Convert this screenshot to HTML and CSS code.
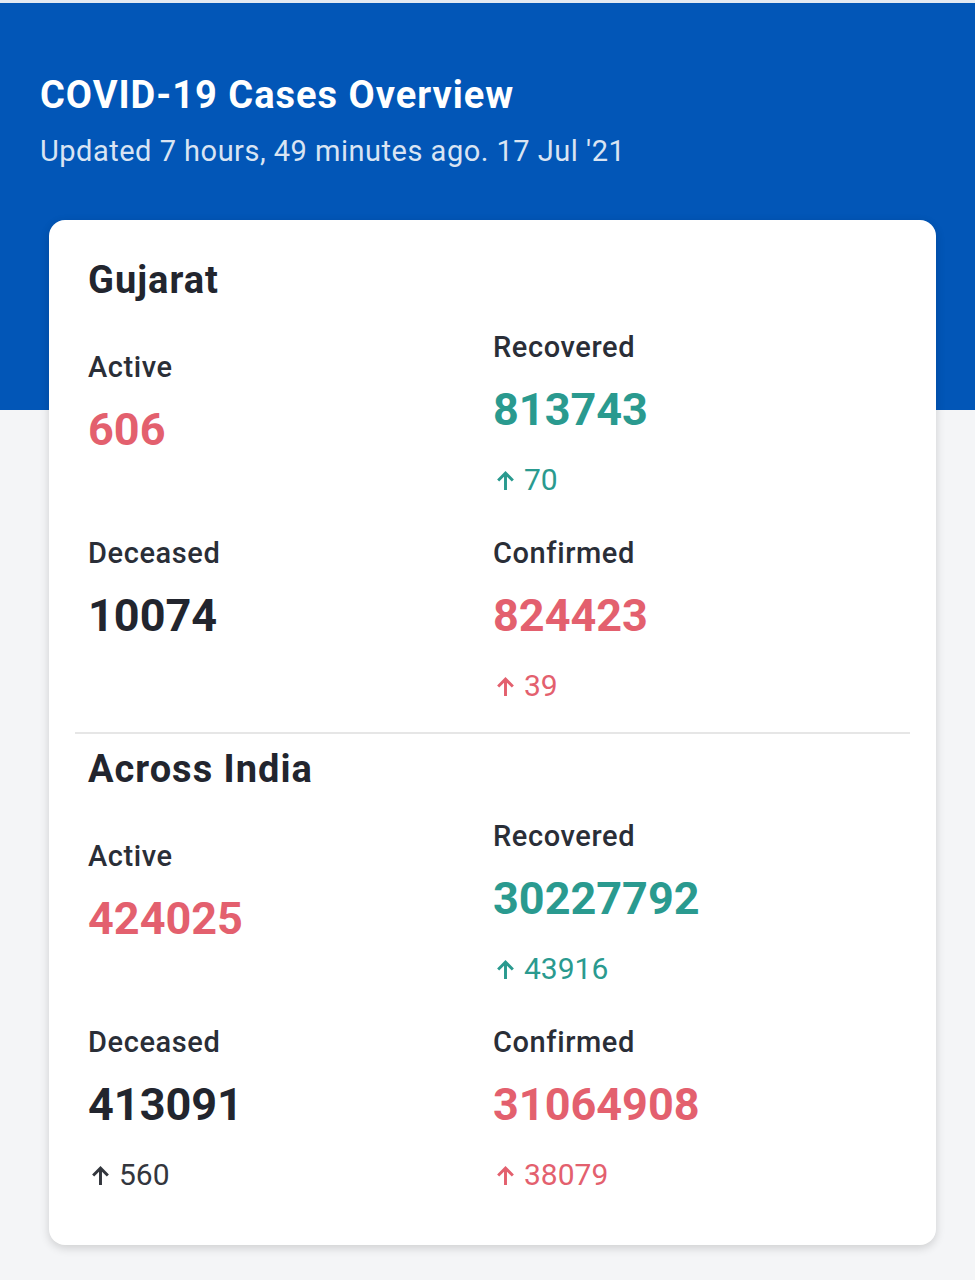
FILE: index.html
```html
<!DOCTYPE html>
<html lang="en">
<head>
<meta charset="utf-8">
<title>COVID-19 Cases Overview</title>
<link rel="stylesheet" href="styles.css">
</head>
<body>
<header class="hero">
  <h1 class="hero-title">COVID-19 Cases Overview</h1>
  <p class="hero-sub">Updated 7 hours, 49 minutes ago. 17 Jul '21</p>
</header>
<main class="card">
  <section class="region">
    <h2 class="region-title">Gujarat</h2>
    <div class="stats">
      <div class="stat stat-offset">
        <div class="label">Active</div>
        <div class="value red">606</div>
      </div>
      <div class="stat">
        <div class="label">Recovered</div>
        <div class="value teal">813743</div>
        <div class="delta teal"><svg class="arrow" viewBox="0 0 20 20"><path d="M10 19V3M3 10l7-7 7 7"/></svg>70</div>
      </div>
      <div class="stat">
        <div class="label">Deceased</div>
        <div class="value dark">10074</div>
      </div>
      <div class="stat">
        <div class="label">Confirmed</div>
        <div class="value red">824423</div>
        <div class="delta red"><svg class="arrow" viewBox="0 0 20 20"><path d="M10 19V3M3 10l7-7 7 7"/></svg>39</div>
      </div>
    </div>
  </section>
  <hr class="divider">
  <section class="region region-second">
    <h2 class="region-title">Across India</h2>
    <div class="stats">
      <div class="stat stat-offset">
        <div class="label">Active</div>
        <div class="value red">424025</div>
      </div>
      <div class="stat">
        <div class="label">Recovered</div>
        <div class="value teal">30227792</div>
        <div class="delta teal"><svg class="arrow" viewBox="0 0 20 20"><path d="M10 19V3M3 10l7-7 7 7"/></svg>43916</div>
      </div>
      <div class="stat">
        <div class="label">Deceased</div>
        <div class="value dark">413091</div>
        <div class="delta dark"><svg class="arrow" viewBox="0 0 20 20"><path d="M10 19V3M3 10l7-7 7 7"/></svg>560</div>
      </div>
      <div class="stat">
        <div class="label">Confirmed</div>
        <div class="value red">31064908</div>
        <div class="delta red"><svg class="arrow" viewBox="0 0 20 20"><path d="M10 19V3M3 10l7-7 7 7"/></svg>38079</div>
      </div>
    </div>
  </section>
</main>
</body>
</html>
```
FILE: styles.css
```css
* { box-sizing: border-box; }
html, body {
  margin: 0;
  padding: 0;
  background: #f4f5f7;
  font-family: Roboto, "Liberation Sans", Arial, sans-serif;
  color: #262a33;
}
.hero {
  height: 410px;
  border-top: 3px solid #e4eaf2;
  background: #0256b7;
  padding: 70px 0 0 40px;
}
.hero-title {
  margin: 0;
  font-size: 38px;
  line-height: 44px;
  letter-spacing: 1px;
  font-weight: 700;
  color: #ffffff;
}
.hero-sub {
  margin: 16px 0 0;
  font-size: 29px;
  line-height: 36px;
  letter-spacing: 0.5px;
  font-weight: 400;
  color: #d9e4f3;
}
.card {
  margin: -190px 39px 35px 49px;
  background: #ffffff;
  border-radius: 16px;
  box-shadow: 0 3px 10px rgba(0, 0, 0, 0.16);
  padding: 38px 26px 50px;
}
.region { padding: 0 13px; }
.region-second { padding-top: 13px; }
.region-title {
  margin: 0;
  font-size: 38px;
  line-height: 44px;
  letter-spacing: 1px;
  font-weight: 700;
  color: #22252e;
}
.stats {
  display: grid;
  grid-template-columns: 405px 1fr;
  row-gap: 35px;
  margin-top: 27px;
  align-items: start;
}
.stat-offset { padding-top: 20px; }
.label {
  font-size: 29px;
  line-height: 36px;
  letter-spacing: 0.6px;
  font-weight: 500;
  color: #2a2e37;
}
.value {
  margin-top: 17px;
  font-size: 45px;
  line-height: 56px;
  font-weight: 700;
}
.delta {
  margin-top: 22px;
  display: flex;
  align-items: center;
  gap: 8px;
  font-size: 30px;
  line-height: 40px;
  font-weight: 400;
}
.arrow {
  width: 21px;
  height: 21px;
  margin-left: 2px;
  fill: none;
  stroke: currentColor;
  stroke-width: 2.8;
  flex: none;
}
.red { color: #e3606e; }
.teal { color: #2a9a8f; }
.dark { color: #22252e; }
.delta.dark { color: #33363d; }
.divider {
  margin: 26px 0 0;
  border: 0;
  border-top: 2px solid #e6e6e6;
}
```
